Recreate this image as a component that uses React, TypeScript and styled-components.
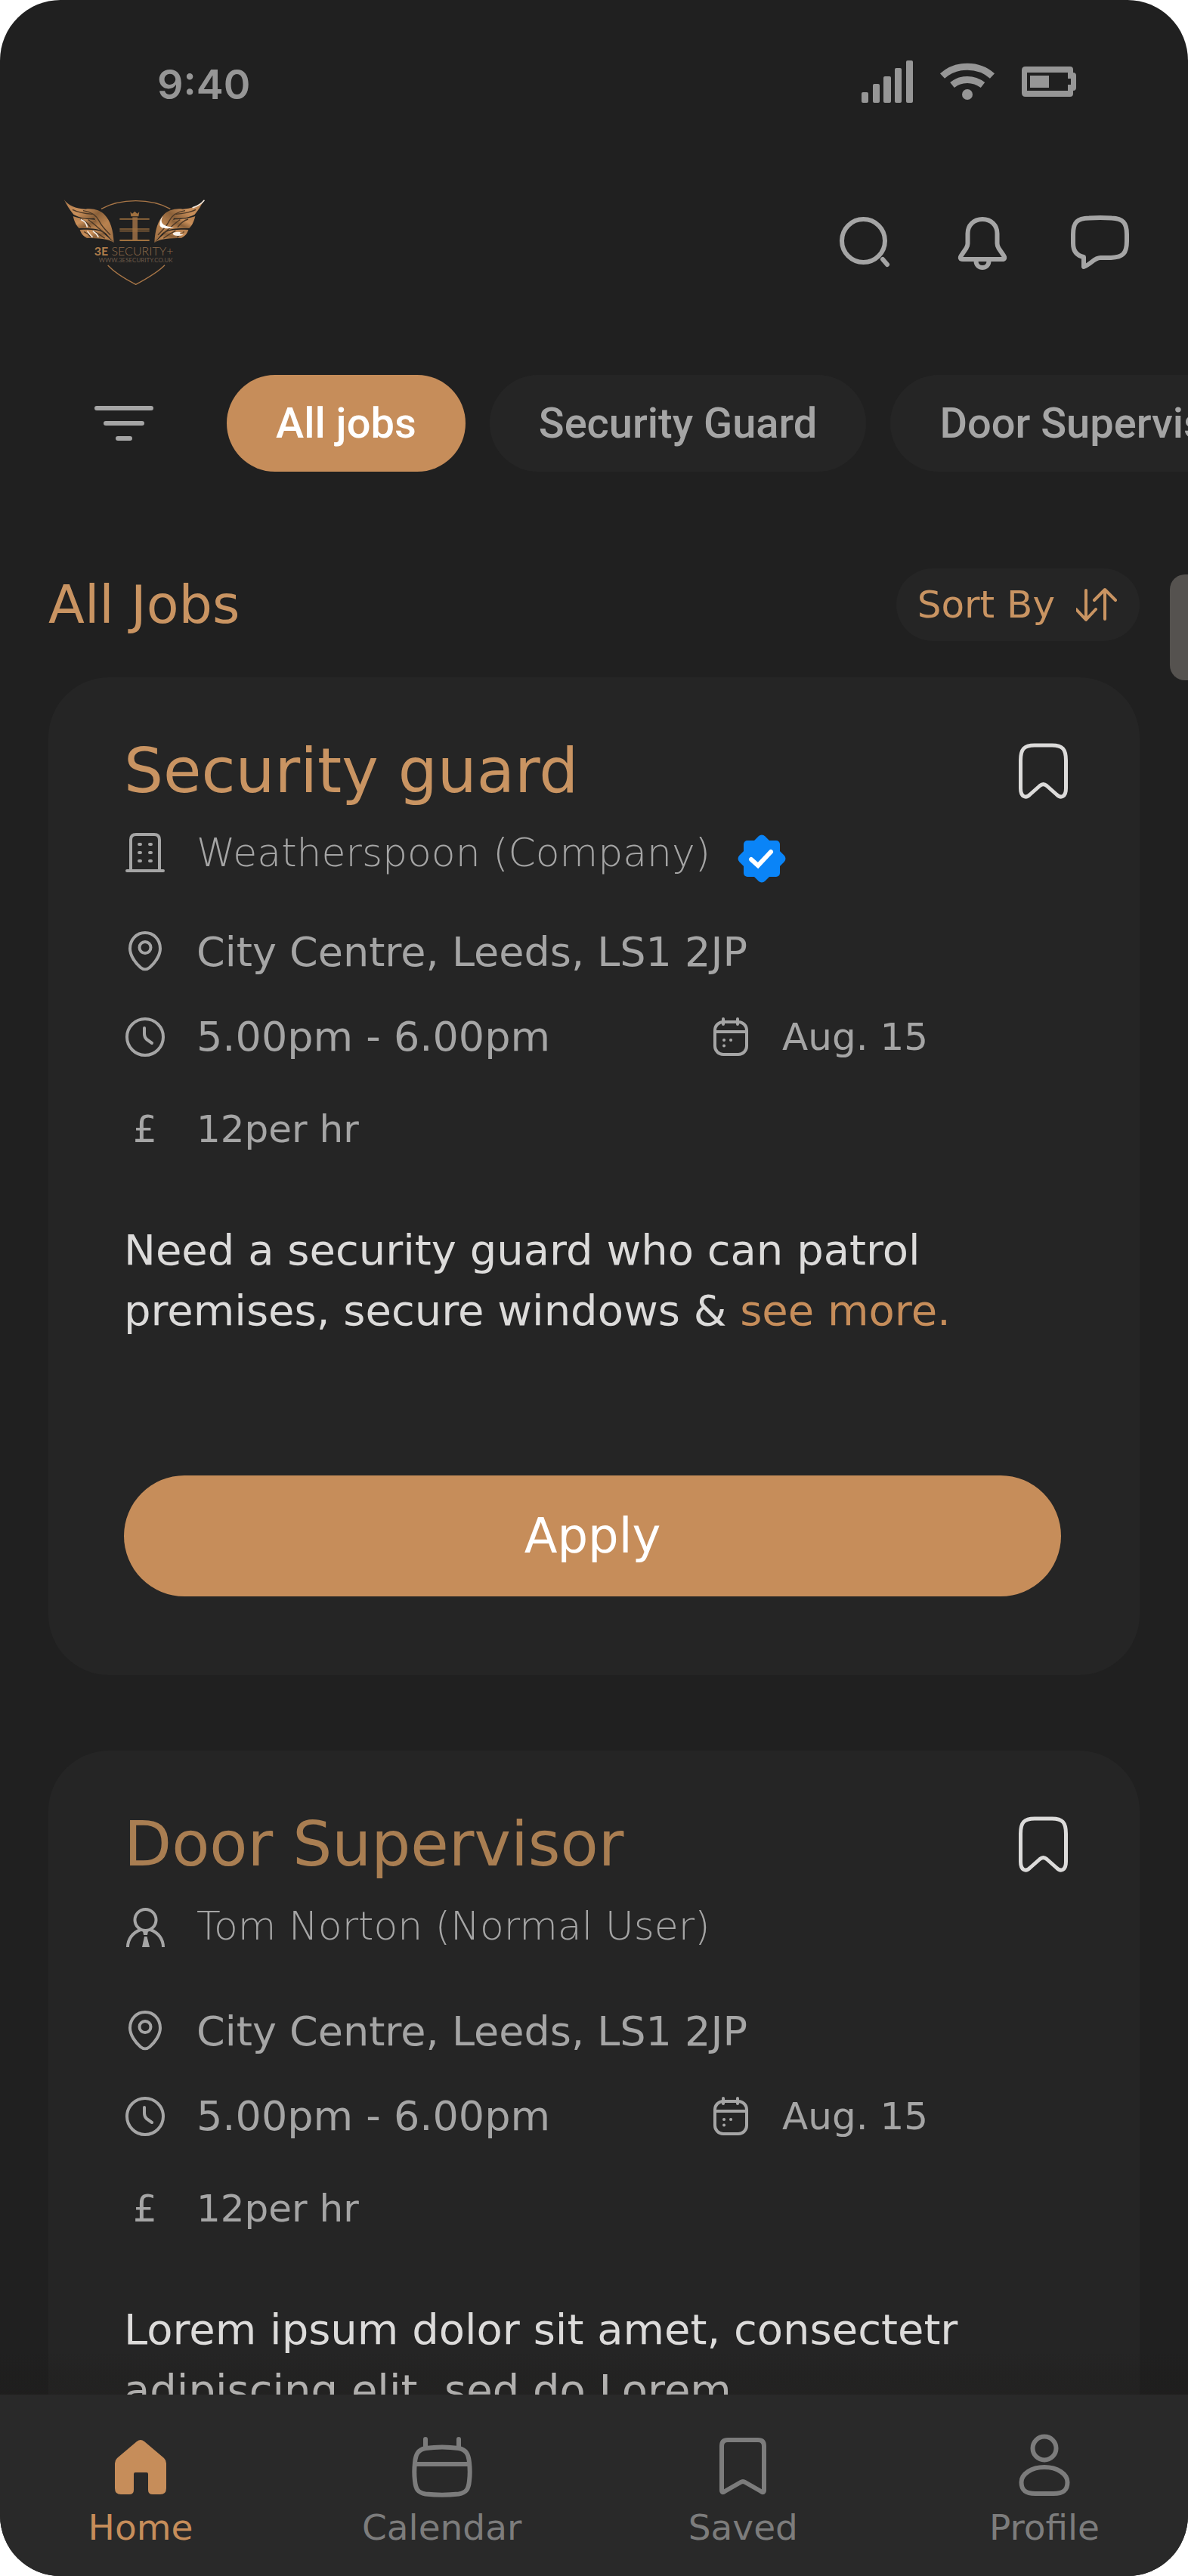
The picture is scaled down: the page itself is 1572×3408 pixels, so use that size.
import React from 'react';
import styled, { createGlobalStyle } from 'styled-components';

const color = {
  page: '#202020',
  card: '#252525',
  nav: '#292929',
  accent: '#c68d5a',
  title: '#c99462',
  muted: '#a5a5a5',
  dim: '#7c7c7c',
  text: '#dcdbda',
};

const GlobalStyle = createGlobalStyle`
  *, *::before, *::after { box-sizing: border-box; }
  body { margin: 0; background: #ffffff; }
  button { border: 0; padding: 0; background: none; font: inherit; color: inherit; cursor: pointer; }
  svg { display: block; flex: none; }
`;

const Screen = styled.div`
  display: flex;
  flex-direction: column;
  height: 100vh;
  overflow: hidden;
  border-radius: 80px;
  background: ${color.page};
  font-family: 'DejaVu Sans', sans-serif;
  position: relative;
`;

const StatusBar = styled.div`
  display: flex;
  justify-content: space-between;
  align-items: flex-start;
  flex: none;
  padding: 80px 148px 0 208px;
  color: #969696;
`;

const Clock = styled.time`
  font: 600 54px/64px Inter, sans-serif;
`;

const Header = styled.header`
  display: flex;
  justify-content: space-between;
  align-items: center;
  flex: none;
  margin-top: 112px;
  padding: 0 68px 0 78px;
`;

const Actions = styled.div`
  display: flex;
  gap: 60px;
  color: ${color.muted};
`;

const IconButton = styled.button`
  width: 96px;
  height: 96px;
`;

const Filters = styled.div`
  display: flex;
  align-items: center;
  flex: none;
  gap: 88px;
  margin-top: 112px;
  padding-left: 116px;
  overflow: hidden;
  color: ${color.muted};
`;

const Chips = styled.div`
  display: flex;
  gap: 32px;
`;

const Chip = styled.button<{ $active?: boolean }>`
  flex: none;
  height: 128px;
  padding: 0 65px;
  border-radius: 64px;
  background: ${(p) => (p.$active ? color.accent : color.card)};
  color: ${(p) => (p.$active ? '#ffffff' : color.muted)};
  font: 500 56px/64px Roboto, sans-serif;
  white-space: nowrap;
`;

const Main = styled.main`
  flex: 1;
  min-height: 0;
  overflow: hidden;
  padding: 128px 64px 0;
`;

const ListHeader = styled.div`
  display: flex;
  justify-content: space-between;
  align-items: center;
  color: ${color.title};
`;

const ListTitle = styled.h1`
  margin: 0;
  font-size: 70px;
  line-height: 80px;
  font-weight: 400;
`;

const SortButton = styled.button`
  display: flex;
  align-items: center;
  gap: 28px;
  height: 96px;
  padding: 0 28px;
  border-radius: 48px;
  background: ${color.card};
  font-size: 50px;
  line-height: 64px;
`;

const Cards = styled.div`
  display: flex;
  flex-direction: column;
  gap: 100px;
  margin-top: 48px;
`;

const Card = styled.article`
  padding: 76px 104px 104px 100px;
  border-radius: 80px;
  background: ${color.card};
  color: ${color.muted};
`;

const CardHead = styled.div`
  display: flex;
  justify-content: space-between;
  align-items: center;
  margin-right: -24px;
  color: ${color.text};
`;

const JobTitle = styled.h2<{ $soft?: boolean }>`
  margin: 0;
  font-size: 82px;
  line-height: 96px;
  font-weight: 400;
  color: ${(p) => (p.$soft ? '#a97e52' : color.title)};
`;

const Row = styled.div<{ $compact?: boolean }>`
  display: flex;
  align-items: center;
  gap: 40px;
  font-size: ${(p) => (p.$compact ? 50 : 54)}px;
  line-height: 64px;
  white-space: nowrap;
`;

const Employer = styled(Row)`
  align-items: flex-start;
  height: 72px;
  margin-top: 28px;
  font-size: 52px;
  font-weight: 200;

  > svg:first-child { margin-top: 4px; }
  > svg:last-child { align-self: flex-end; margin-left: -4px; }
`;

const Details = styled.div<{ $loose?: boolean }>`
  display: grid;
  grid-template-columns: 5fr 3fr;
  row-gap: 48px;
  margin-top: ${(p) => (p.$loose ? 68 : 60)}px;
`;

const WideRow = styled(Row)`
  grid-column: 1 / -1;
`;

const PayRow = styled(WideRow)`
  padding-top: 10px;
`;

const Pound = styled.span`
  width: 56px;
  text-align: center;
`;

const Description = styled.p`
  margin: 88px 0 0;
  font-size: 56px;
  line-height: 80px;
  color: ${color.text};
`;

const More = styled.a`
  color: ${color.accent};
  text-decoration: none;
`;

const Apply = styled.button`
  display: block;
  width: 100%;
  height: 160px;
  margin-top: 178px;
  border-radius: 80px;
  background: ${color.accent};
  color: #ffffff;
  font-size: 64px;
  line-height: 80px;
`;

const ScrollThumb = styled.div`
  position: absolute;
  top: 760px;
  right: 0;
  width: 24px;
  height: 140px;
  border-radius: 20px 0 0 20px;
  background: #55524f;
`;

const Nav = styled.nav`
  position: relative;
  display: flex;
  justify-content: space-between;
  align-items: flex-start;
  flex: none;
  height: 240px;
  padding: 48px 80px 0 76px;
  background: ${color.nav};

  &::before {
    content: '';
    position: absolute;
    left: 0;
    right: 0;
    bottom: 100%;
    height: 56px;
    background: linear-gradient(rgba(26, 24, 22, 0), rgba(26, 24, 22, 0.2) 50%, rgba(26, 24, 22, 0.24));
  }
`;

const NavItem = styled.a<{ $active?: boolean }>`
  display: flex;
  flex-direction: column;
  align-items: center;
  gap: 4px;
  width: 220px;
  color: ${(p) => (p.$active ? color.accent : color.dim)};
  font-size: 47px;
  line-height: 56px;
  text-decoration: none;
`;

type IconProps = { size: number; stroke?: number; children: React.ReactNode };

const Icon = ({ size, stroke = 4, children }: IconProps) => (
  <svg
    width={size}
    height={size}
    viewBox={`0 0 ${size} ${size}`}
    fill="none"
    stroke="currentColor"
    strokeWidth={stroke}
    strokeLinecap="round"
    strokeLinejoin="round"
    aria-hidden="true"
  >
    {children}
  </svg>
);

const StatusIcons = () => (
  <svg width="284" height="56" viewBox="0 0 284 56" fill="currentColor" aria-hidden="true">
    <rect x="0" y="42" width="9" height="14" rx="2" />
    <rect x="15" y="31" width="9" height="25" rx="2" />
    <rect x="29" y="21" width="10" height="35" rx="2" />
    <rect x="44" y="10" width="9" height="46" rx="2" />
    <rect x="59" y="0" width="9" height="56" rx="2" />
    <g fill="none" stroke="currentColor" strokeWidth="9">
      <path d="M107 20.500C125 4 155 4 173 20.500" />
      <path d="M120 32.500C132 23 148 23 160.500 32.500" />
    </g>
    <circle cx="140" cy="45" r="7" />
    <path
      fillRule="evenodd"
      d="M217 8H276Q280 8 280 12V16Q284 16 284 20V36Q284 40 280 40V44Q280 48 276 48H217Q212 48 212 43V13Q212 8 217 8ZM219 16V40H273V32H277V24H273V16Z"
    />
    <rect x="223" y="20" width="25" height="16" />
  </svg>
);

const Wing = () => (
  <g>
    <path fill="url(#wing)" d="M44 72C60 95 90 108 130 110C160 106 190 115 205 132C228 155 240 195 242 243L212 208C190 190 175 168 165 146C130 150 100 142 82 131C65 112 55 92 44 72Z" />
    <path fill="url(#wing)" d="M80 138C110 150 140 150 168 152L206 202C180 186 150 185 104 186C90 172 84 155 80 138Z" />
    <path fill="url(#wing)" d="M107 192C140 190 170 190 195 200L242 243C220 227 180 225 135 225C118 216 111 205 107 192Z" />
    <g fill="none" stroke="#4c3826" strokeWidth="4">
      <path d="M78 112C105 126 132 128 158 130" />
      <path d="M120 116C150 120 172 134 184 158S212 196 228 212" />
      <path d="M108 150C128 156 140 168 150 182" />
      <path d="M140 152C162 166 178 184 206 206" />
      <path d="M124 200C138 206 146 214 152 222M158 196C176 204 190 214 206 226" />
    </g>
  </g>
);

const Logo = () => (
  <svg width="200" height="128" viewBox="24 48 600 384" role="img" aria-label="3E Security+">
    <defs>
      <linearGradient id="wing" x1="0" y1="0" x2="1" y2="1">
        <stop offset="0" stopColor="#b07c4d" />
        <stop offset="0.3" stopColor="#c98f5a" />
        <stop offset="0.5" stopColor="#8a6039" />
        <stop offset="0.7" stopColor="#b9824f" />
        <stop offset="1" stopColor="#9a6c42" />
      </linearGradient>
    </defs>
    <g fill="none" stroke="#a87647" strokeWidth="4">
      <path d="M192 109C268 66 390 66 466 109" />
      <path d="M218 333C248 365 288 388 329 409C368 388 415 362 444 332" />
    </g>
    <Wing />
    <g transform="translate(645 0) scale(-1 1)">
      <Wing />
    </g>
    <g fill="none" stroke="#f3e9df" strokeWidth="5" strokeLinecap="round">
      <path d="M112 152C128 158 134 170 136 180M138 198C142 206 148 212 156 220M160 198C170 204 176 212 180 220" />
      <path d="M556 104C576 98 590 88 600 76" />
    </g>
    <path fill="#ffffff" d="M438 136C424 158 428 178 480 183C448 190 426 188 424 172C424 156 430 144 438 136Z" />
    <ellipse cx="497" cy="208" rx="21" ry="8" fill="#f7f0e8" />
    <ellipse cx="512" cy="206" rx="8" ry="4" fill="#a87647" />
    <g fill="#a0713f">
      <path d="M307 121L315 128L325 119L335 128L343 121L340 139H310Z" />
      <rect x="316" y="142" width="20" height="92" fill="#8b6440" />
      <rect x="265" y="147" width="118" height="5" />
      <rect x="265" y="187" width="118" height="4" />
      <rect x="265" y="195" width="118" height="4" />
      <rect x="265" y="231" width="118" height="6" />
    </g>
    <text x="164" y="293" fontFamily="Lato, sans-serif" fontSize="48" fill="#8d6a4a">
      <tspan fontWeight="700" fill="#b17d4b">3E</tspan>
      <tspan fontWeight="300"> SECURITY+</tspan>
    </text>
    <text x="182" y="320" fontFamily="Lato, sans-serif" fontSize="24" fill="#6b5848">
      WWW.3ESECURITY.CO.UK
    </text>
  </svg>
);

const BuildingIcon = () => (
  <Icon size={56}>
    <path d="M9 52V11Q9 4 16 4H40Q47 4 47 11V52M4 52H52" />
    <path d="M20 17H22M34 17H36M20 28H22M34 28H36M20 39H22M34 39H36" />
  </Icon>
);

const PersonIcon = () => (
  <Icon size={56}>
    <circle cx="28.500" cy="20" r="14" />
    <g strokeLinecap="butt">
      <path d="M5 56C5 46 11 37 22 33M35 33C46 37 52 46 52 56" />
    </g>
    <path d="M25 35H32L31 40H26ZM27 42H30.500L34 56H24Z" fill="currentColor" stroke="none" />
  </Icon>
);

const PinIcon = () => (
  <Icon size={56}>
    <path d="M28 2C17 2 8 10.500 8 23C8 32 15 42 22 48C25.500 51 30.500 51 34 48C41 42 48 32 48 23C48 10.500 39 2 28 2Z" />
    <circle cx="28" cy="21.500" r="7.500" />
  </Icon>
);

const ClockIcon = () => (
  <Icon size={56}>
    <circle cx="28" cy="28" r="24" />
    <path d="M27 16V24Q27 28 30 31L37 36" />
  </Icon>
);

const DateIcon = () => (
  <Icon size={56}>
    <rect x="7" y="8" width="42" height="43" rx="11" />
    <path d="M7 21H49M18 4V11M37 4V11" />
    <path d="M19 32H19.100M28 32H28.100M19 39.500H19.100" />
  </Icon>
);

const BookmarkIcon = () => (
  <Icon size={96} stroke={5}>
    <path d="M18.500 34C18.500 19 23 14 37 14H60C74 14 78.500 19 78.500 34V71C78.500 82 72 85 66 79L53 67.500C50 65 47 65 44 67.500L31 79C25 85 18.500 82 18.500 71Z" />
  </Icon>
);

const VerifiedIcon = () => (
  <svg width="64" height="64" viewBox="0 0 64 64" role="img" aria-label="Verified">
    <g fill="#0a84f7">
      <rect x="8" y="8" width="48" height="48" rx="5" />
      <rect x="8" y="8" width="48" height="48" rx="6" transform="rotate(45 32 32)" />
    </g>
    <path d="M18 33L27 41L44 23" fill="none" stroke="#ffffff" strokeWidth="6" strokeLinecap="round" />
  </svg>
);

type Job = {
  title: string;
  soft?: boolean;
  employer: string;
  company?: boolean;
  description: React.ReactNode;
};

const jobs: Job[] = [
  {
    title: 'Security guard',
    employer: 'Weatherspoon (Company)',
    company: true,
    description: (
      <>
        Need a security guard who can patrol
        <br />
        premises, secure windows &amp; <More href="#more">see more.</More>
      </>
    ),
  },
  {
    title: 'Door Supervisor',
    soft: true,
    employer: 'Tom Norton (Normal User)',
    description: (
      <>
        Lorem ipsum dolor sit amet, consectetr
        <br />
        adipiscing elit, sed do Lorem
      </>
    ),
  },
];

const JobCard = ({ job }: { job: Job }) => (
  <Card>
    <CardHead>
      <JobTitle $soft={job.soft}>{job.title}</JobTitle>
      <IconButton type="button" aria-label="Save job">
        <BookmarkIcon />
      </IconButton>
    </CardHead>
    <Employer>
      {job.company ? <BuildingIcon /> : <PersonIcon />}
      <span>{job.employer}</span>
      {job.company && <VerifiedIcon />}
    </Employer>
    <Details $loose={!job.company}>
      <WideRow>
        <PinIcon />
        <span>City Centre, Leeds, LS1 2JP</span>
      </WideRow>
      <Row>
        <ClockIcon />
        <span>5.00pm - 6.00pm</span>
      </Row>
      <Row $compact>
        <DateIcon />
        <span>Aug. 15</span>
      </Row>
      <PayRow $compact>
        <Pound>£</Pound>
        <span>12per hr</span>
      </PayRow>
    </Details>
    <Description>{job.description}</Description>
    <Apply type="button">Apply</Apply>
  </Card>
);

export default function App() {
  return (
    <>
      <GlobalStyle />
      <Screen>
        <StatusBar>
          <Clock>9:40</Clock>
          <StatusIcons />
        </StatusBar>
        <Header>
          <Logo />
          <Actions>
            <IconButton type="button" aria-label="Search">
              <Icon size={96} stroke={6}>
                <circle cx="46.500" cy="46.500" r="28.500" />
                <path d="M72 71L78 78" />
              </Icon>
            </IconButton>
            <IconButton type="button" aria-label="Notifications">
              <Icon size={96} stroke={6}>
                <path d="M48 18C36.500 18 28.500 26 28.500 37V50C28.500 53 28 54 26.500 56.500L20 66C18 69 18.500 71 22 71H74C77.500 71 78 69 76 66L69.500 56.500C68 54 67.500 53 67.500 50V37C67.500 26 59.500 18 48 18Z" />
                <path d="M39.500 73C39.500 85 56.500 85 56.500 73" />
              </Icon>
            </IconButton>
            <IconButton type="button" aria-label="Messages">
              <Icon size={96} stroke={6}>
                <path d="M26 81V68C16 66 12 60 12 50V38C12 21 18 17 33 16.500Q48 15.500 63 16.500C78 17 83 23 83 38V47C83 63 78 68.500 62 69H48C40 69 35 78 26 81Z" />
              </Icon>
            </IconButton>
          </Actions>
        </Header>
        <Filters>
          <IconButton type="button" aria-label="Filter">
            <Icon size={96} stroke={6}>
              <path d="M12 28H84M24 48H72M40 68H56" />
            </Icon>
          </IconButton>
          <Chips>
            <Chip type="button" $active>All jobs</Chip>
            <Chip type="button">Security Guard</Chip>
            <Chip type="button">Door Supervisor</Chip>
          </Chips>
        </Filters>
        <Main>
          <ListHeader>
            <ListTitle>All Jobs</ListTitle>
            <SortButton type="button">
              Sort By
              <svg width="56" height="48" viewBox="0 0 56 48" fill="none" stroke="currentColor" strokeWidth="4" strokeLinecap="round" strokeLinejoin="round" aria-hidden="true">
                <path d="M13 5V43M0 30L13 44L26 30M38 43V5M24 18L38 4L52 18" />
              </svg>
            </SortButton>
          </ListHeader>
          <Cards>
            {jobs.map((job) => (
              <JobCard key={job.title} job={job} />
            ))}
          </Cards>
        </Main>
        <ScrollThumb />
        <Nav>
          <NavItem href="#home" $active>
            <svg width="96" height="96" viewBox="0 0 96 96" fill="currentColor" aria-hidden="true">
              <path d="M43 14Q48 10 53 14L79 36Q82 39 82 43V76Q82 84 74 84H64Q58 84 58 78V57Q58 55 56 55H41Q39 55 39 57V78Q39 84 33 84H22Q14 84 14 76V43Q14 39 17 36Z" />
            </svg>
            Home
          </NavItem>
          <NavItem href="#calendar">
            <Icon size={96} stroke={6}>
              <path d="M26 23C40 21 56 21 70 23C80 25 83 31 84 42C85 51 85 58 84 66C83 77 80 82 70 83.500C56 85 40 85 26 83.500C16 82 13 77 12 66C11 58 11 51 12 42C13 31 16 25 26 23Z" />
              <path d="M12 44H84M26 11V21M70 11V21" />
            </Icon>
            Calendar
          </NavItem>
          <NavItem href="#saved">
            <Icon size={96} stroke={6}>
              <path d="M20 20Q20 12 28 12H68Q76 12 76 20V78Q76 83 72 80L51 68Q48 66 45 68L24 80Q20 83 20 78Z" />
            </Icon>
            Saved
          </NavItem>
          <NavItem href="#profile">
            <Icon size={96} stroke={6}>
              <circle cx="48" cy="23" r="15.500" />
              <path d="M48 48C65 48 78.500 57 78.500 68C78.500 79 72 83 60 83H36C24 83 17.500 79 17.500 68C17.500 57 31 48 48 48Z" />
            </Icon>
            Profile
          </NavItem>
        </Nav>
      </Screen>
    </>
  );
}
